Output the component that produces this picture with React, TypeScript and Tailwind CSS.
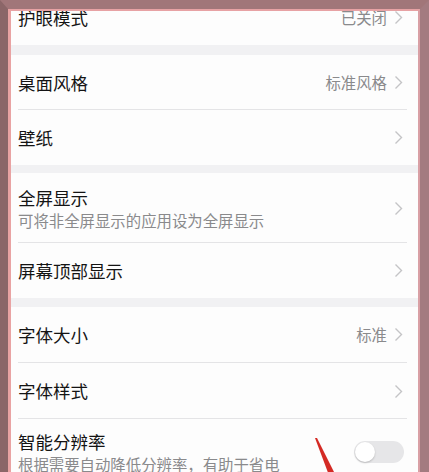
import { ReactNode } from "react";

const font = { fontFamily: '"Noto Sans CJK SC", "Noto Sans", sans-serif' };

function Chevron() {
  return (
    <svg width="9" height="15" viewBox="0 0 9 15" className="shrink-0">
      <polyline points="1.5,1.5 7.5,7.5 1.5,13.5" fill="none" stroke="#c4c4c6" strokeWidth="1.4" />
    </svg>
  );
}

function Row({ title, value, sub, right, h = "h-[55px]", divider = false, className = "" }: {
  title: string;
  value?: string;
  sub?: string;
  right?: ReactNode;
  h?: string;
  divider?: boolean;
  className?: string;
}) {
  return (
    <div className={`relative flex items-center bg-[#fdfdfd] pl-[7px] pr-[15px] ${h} ${className}`}>
      <div className="flex-1 min-w-0">
        <div className="text-[17.5px] leading-[24px] text-[#141414]">{title}</div>
        {sub && <div className="text-[15.4px] leading-[21px] text-[#8a8a8c] whitespace-nowrap">{sub}</div>}
      </div>
      {right ?? (
        <div className="flex items-center gap-[7px]">
          {value && <span className="text-[15.4px] text-[#8a8a8c]">{value}</span>}
          <Chevron />
        </div>
      )}
      {divider && <div className="absolute left-[7px] right-[11px] bottom-0 h-px bg-[#e4e4e6]" />}
    </div>
  );
}

function Gap({ h }: { h: string }) {
  return <div className={`${h} bg-[#f1f1f3]`} />;
}

export default function App() {
  return (
    <div className="w-[429px] h-[472px] overflow-hidden border-t-[9px] border-l-[8px] border-r-[9px] border-t-[#a17679] border-l-[#8b6668] border-r-[#a37b80]" style={font}>
      <div className="relative h-full overflow-hidden border-t-2 border-l-[3px] border-r-2 border-t-[#e7a2a4] border-l-[#e9a3a3] border-r-[#d9a0a5] bg-[#f1f1f3]">
        <Row title="护眼模式" value="已关闭" className="-mt-[21px]" />
        <Gap h="h-[10px]" />
        <Row title="桌面风格" value="标准风格" h="h-[55px]" divider />
        <Row title="壁纸" h="h-[55px]" />
        <Gap h="h-[8px]" />
        <Row title="全屏显示" sub="可将非全屏显示的应用设为全屏显示" h="h-[70px]" divider />
        <Row title="屏幕顶部显示" h="h-[55px]" />
        <Gap h="h-[9px]" />
        <Row title="字体大小" value="标准" h="h-[56px]" divider />
        <Row title="字体样式" h="h-[56px]" divider />
        <Row
          title="智能分辨率"
          sub="根据需要自动降低分辨率，有助于省电"
          h="h-[70px]"
          className="!items-start pt-[11px]"
          right={
            <div className="relative mt-[11px] mr-[-1px] w-[50px] h-[22px] rounded-full bg-[#e6e6e8]">
              <div className="absolute left-[1px] top-[1px] w-[20px] h-[20px] rounded-full bg-white shadow-[0_1px_2px_rgba(0,0,0,0.2)]" />
            </div>
          }
        />
        <svg className="absolute left-[304px] top-[427px]" width="24" height="40" viewBox="0 0 24 40">
          <polygon points="0,0 2,0 22,40 15,40" fill="#d42a24" />
        </svg>
      </div>
    </div>
  );
}
